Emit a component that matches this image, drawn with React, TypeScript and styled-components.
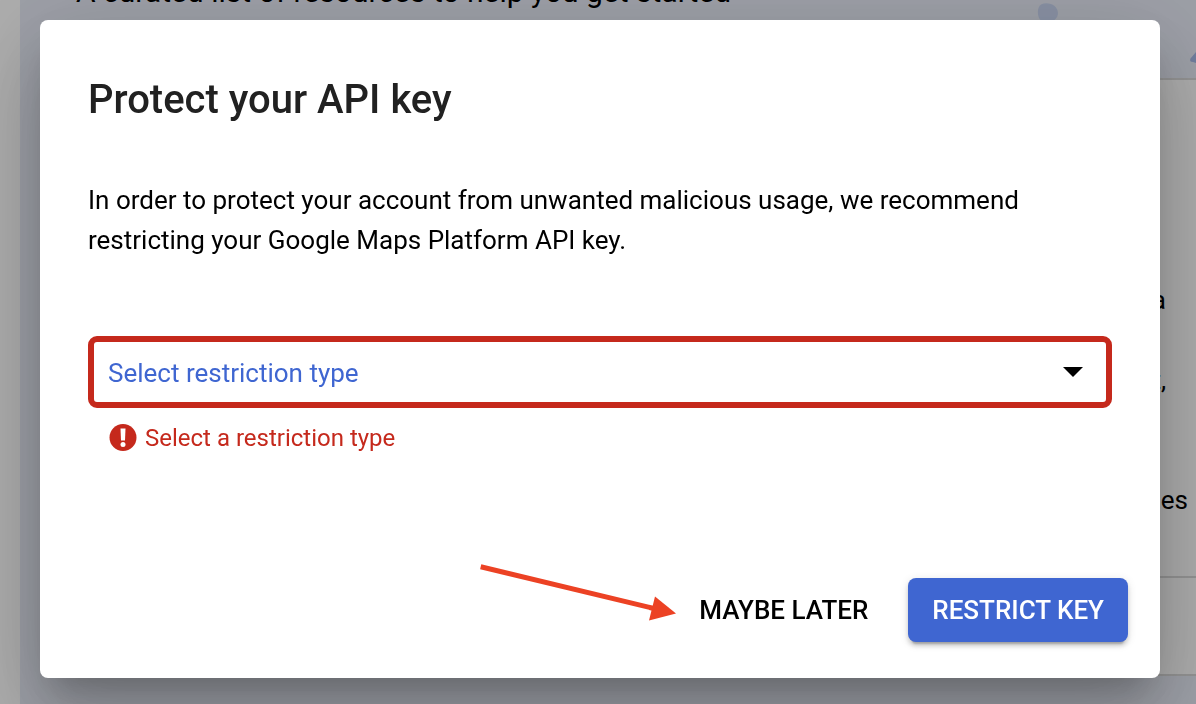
import React from "react";
import styled, { createGlobalStyle } from "styled-components";

const GlobalStyle = createGlobalStyle`
  *, *::before, *::after { box-sizing: border-box; }
  body {
    margin: 0;
    background: #fff;
    color: #000;
    font-family: Roboto, "Liberation Sans", sans-serif;
    font-size: 26px;
    line-height: 40px;
    overflow: hidden;
  }
  h2, p { margin: 0; }
`;

const Page = styled.div`
  min-height: 100vh;
  padding-left: 20px;
  display: flex;
`;

const Resources = styled.main`
  flex: 1;
  min-width: 0;
  background: #e8ecf7;
`;

const Hero = styled.header`
  display: flex;
  justify-content: space-between;
  height: 78px;
  padding-left: 56px;
  overflow: hidden;
`;

const Intro = styled.p`
  margin-top: -28px;
  font-size: 30px;
  white-space: nowrap;
`;

const Dots = styled.svg`
  flex: none;
  width: 160px;
  height: 78px;
`;

const Card = styled.section`
  margin-left: 56px;
  background: #fff;
  border: solid #dadada;
  border-width: 2px 0;
`;

const CardBody = styled.div`
  height: 498px;
  padding-top: 200px;
  border-bottom: 2px solid #dadada;
`;

const CardFooter = styled.div`
  height: 96px;
`;

const CardLine = styled.p<{ $inset: number; $gap?: number }>`
  padding-right: ${(p) => p.$inset}px;
  margin-bottom: ${(p) => p.$gap ?? 0}px;
  text-align: right;
`;

const Backdrop = styled.div`
  position: fixed;
  inset: 0;
  padding: 20px 36px 26px 40px;
  background: rgba(0, 0, 0, 0.32);
`;

const Dialog = styled.div`
  display: flex;
  flex-direction: column;
  min-height: 100%;
  padding: 48px 32px 36px 48px;
  background: #fff;
  border-radius: 8px;
  box-shadow:
    0 22px 30px -14px rgba(0, 0, 0, 0.2),
    0 48px 76px 6px rgba(0, 0, 0, 0.14),
    0 18px 92px 16px rgba(0, 0, 0, 0.12);
`;

const Title = styled.h2`
  color: #212121;
  font-size: 40px;
  font-weight: 500;
  line-height: 64px;
`;

const Message = styled.p`
  max-width: 960px;
  margin-top: 48px;
`;

const Field = styled.div`
  margin: 76px 16px 0 0;
`;

const SelectBox = styled.div`
  display: flex;
  align-items: center;
  position: relative;
`;

const Select = styled.select`
  appearance: none;
  width: 100%;
  height: 72px;
  padding: 2px 64px 0 14px;
  border: 6px solid #c5291c;
  border-radius: 9px;
  outline: none;
  background: #fff;
  color: #3f66d1;
  font: inherit;
`;

const Caret = styled.svg`
  position: absolute;
  right: 28px;
  width: 22px;
  height: 10px;
  pointer-events: none;
`;

const FieldError = styled.p`
  display: flex;
  align-items: center;
  gap: 8px;
  margin-top: 10px;
  padding-left: 21px;
  color: #c5291c;
  font-size: 24px;
`;

const ErrorIcon = styled.svg`
  width: 28px;
  height: 28px;
`;

const Actions = styled.div`
  display: flex;
  justify-content: flex-end;
  gap: 16px;
  position: relative;
  margin-top: auto;
`;

const Button = styled.button<{ $primary?: boolean }>`
  height: 64px;
  padding: 0 24px;
  border: 0;
  border-radius: 8px;
  background: ${(p) => (p.$primary ? "#3f66d1" : "transparent")};
  color: ${(p) => (p.$primary ? "#fff" : "#000")};
  box-shadow: ${(p) =>
    p.$primary
      ? "0 6px 2px -4px rgba(0,0,0,.2), 0 4px 4px rgba(0,0,0,.14), 0 2px 10px rgba(0,0,0,.12)"
      : "none"};
  font: inherit;
  font-weight: 500;
  text-transform: uppercase;
  cursor: pointer;
`;

const Pointer = styled.svg`
  position: absolute;
  right: 452px;
  top: -18px;
  width: 200px;
  height: 64px;
  pointer-events: none;
`;

export default function App() {
  return (
    <>
      <GlobalStyle />
      <Page>
        <Resources>
          <Hero>
            <Intro>A curated list of resources to help you get started</Intro>
            <Dots viewBox="0 0 160 78" aria-hidden="true">
              <path d="M5 4.500C9 2.500 15 3 18.500 6C23 10 23 16 19 19.500C15 23 7 23 4 19.500C1 16 1 7 5 4.500Z" fill="#cad6f2" />
              <path d="M160 52L154.500 58.500Q153 62 157 62L160 63Z" fill="#a6b9e8" />
            </Dots>
          </Hero>
          <Card>
            <CardBody>
              <CardLine $inset={30} $gap={40}>a</CardLine>
              <CardLine $inset={30} $gap={80}>t,</CardLine>
              <CardLine $inset={8}>es</CardLine>
            </CardBody>
            <CardFooter />
          </Card>
        </Resources>
      </Page>
      <Backdrop>
        <Dialog role="dialog" aria-modal="true" aria-labelledby="dialog-title">
          <Title id="dialog-title">Protect your API key</Title>
          <Message>
            In order to protect your account from unwanted malicious usage, we
            recommend restricting your Google Maps Platform API key.
          </Message>
          <Field>
            <SelectBox>
              <Select
                aria-label="Restriction type"
                aria-invalid="true"
                aria-describedby="restriction-error"
                defaultValue=""
              >
                <option value="">Select restriction type</option>
              </Select>
              <Caret viewBox="0 0 22 10" aria-hidden="true">
                <path d="M1 0H21L11 10Z" fill="#000" />
              </Caret>
            </SelectBox>
            <FieldError id="restriction-error">
              <ErrorIcon viewBox="0 0 28 28" aria-hidden="true">
                <circle cx="14" cy="13.500" r="13.500" fill="#c5291c" />
                <path d="M11.500 4.500H16.500L16 16.500H12Z" fill="#fff" />
                <circle cx="14" cy="20.500" r="2.500" fill="#fff" />
              </ErrorIcon>
              Select a restriction type
            </FieldError>
          </Field>
          <Actions>
            <Pointer viewBox="0 0 200 64" aria-hidden="true">
              <path d="M4.700 6.800L178 48.500" stroke="#ec4224" strokeWidth="5" fill="none" />
              <path d="M179 36.500L200 53.500L173 60.500Z" fill="#ec4224" />
            </Pointer>
            <Button type="button">Maybe later</Button>
            <Button type="button" $primary>Restrict key</Button>
          </Actions>
        </Dialog>
      </Backdrop>
    </>
  );
}
